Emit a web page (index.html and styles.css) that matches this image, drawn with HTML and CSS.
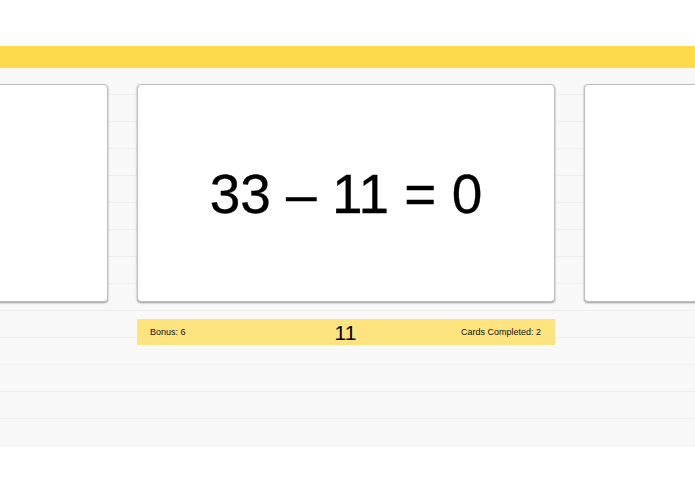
FILE: index.html
```html
<!DOCTYPE html>
<html>
<head>
<meta charset="utf-8">
<link rel="stylesheet" href="styles.css">
</head>
<body>
<div class="top"></div>
<div class="bar"></div>
<main class="stage">
  <div class="cards">
    <div class="card"></div>
    <div class="card current"><span class="eq">33 – 11 = 0</span></div>
    <div class="card"></div>
  </div>
  <div class="score">
    <span class="bonus">Bonus: 6</span>
    <span class="points">11</span>
    <span class="done">Cards Completed: 2</span>
  </div>
</main>
</body>
</html>
```
FILE: styles.css
```css
html, body {
  margin: 0;
  padding: 0;
  background: #ffffff;
  font-family: "Liberation Sans", Arial, Helvetica, sans-serif;
  color: #111;
}
body {
  width: 695px;
  height: 494px;
  overflow: hidden;
}
.top {
  height: 46px;
  background: #ffffff;
}
.bar {
  height: 22px;
  background: #fcda4a;
}
.stage {
  height: 379px;
  box-sizing: border-box;
  padding-top: 16px;
  background-color: #f8f8f8;
  background-image: repeating-linear-gradient(to bottom, transparent 0, transparent 26px, #efefef 26px, #efefef 27px);
  overflow: hidden;
}
.cards {
  display: flex;
  gap: 29px;
  margin-left: -310px;
}
.card {
  flex: 0 0 418px;
  height: 218px;
  box-sizing: border-box;
  background: #ffffff;
  border: 1px solid #c0c0c0;
  border-radius: 4px;
  box-shadow: 0 1px 2px rgba(0, 0, 0, 0.4);
  display: flex;
  align-items: center;
  justify-content: center;
}
.eq {
  font-size: 55px;
  color: #000;
  line-height: 1;
  padding-top: 2px;
  -webkit-text-stroke: 0.3px #000;
}
.score {
  margin: 17px 0 0 137px;
  width: 418px;
  height: 26px;
  box-sizing: border-box;
  background: #fde47f;
  display: grid;
  grid-template-columns: 1fr auto 1fr;
  align-items: center;
  padding: 0 14px 0 13px;
}
.bonus, .done {
  font-size: 9px;
  color: #111;
}
.done {
  justify-self: end;
}
.points {
  font-size: 21px;
  color: #000;
  line-height: 1;
  padding-top: 1px;
}
```
